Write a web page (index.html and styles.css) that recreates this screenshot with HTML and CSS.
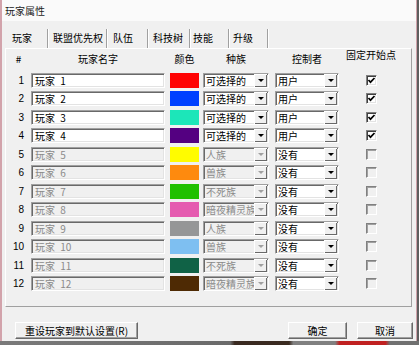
FILE: index.html
```html
<!DOCTYPE html>
<html>
<head>
<meta charset="utf-8">
<link rel="stylesheet" href="styles.css">
</head>
<body>
<div class="window">
  <div class="titlebar">玩家属性</div>
  <div class="tabs">
    <div class="tab active t1">玩家</div>
    <div class="tab t2">联盟优先权</div>
    <div class="tab t3">队伍</div>
    <div class="tab t4">科技树</div>
    <div class="tab t5">技能</div>
    <div class="tab t6">升级</div>
  </div>
  <div class="panel">
    <div class="grid head">
      <div class="hnum">#</div>
      <div class="hname">玩家名字</div>
      <div class="hcolor">颜色</div>
      <div class="hrace">种族</div>
      <div class="hctrl">控制者</div>
      <div class="hfix">固定开始点</div>
    </div>
    <div class="rows">
      <div class="grid row">
        <div class="num">1</div>
        <div class="field name">玩家 1</div>
        <div class="swatch c1"></div>
        <div class="combo race"><span class="val">可选择的</span><span class="btn"><span class="arrow"></span></span></div>
        <div class="combo ctrl"><span class="val">用户</span><span class="btn"><span class="arrow"></span></span></div>
        <div class="check on"><svg width="11" height="11" viewBox="0 0 11 11"><polyline points="2.5,5 4.5,7.2 8.5,3" fill="none" stroke="#000" stroke-width="1.7"/></svg></div>
      </div>
      <div class="grid row">
        <div class="num">2</div>
        <div class="field name">玩家 2</div>
        <div class="swatch c2"></div>
        <div class="combo race"><span class="val">可选择的</span><span class="btn"><span class="arrow"></span></span></div>
        <div class="combo ctrl"><span class="val">用户</span><span class="btn"><span class="arrow"></span></span></div>
        <div class="check on"><svg width="11" height="11" viewBox="0 0 11 11"><polyline points="2.5,5 4.5,7.2 8.5,3" fill="none" stroke="#000" stroke-width="1.7"/></svg></div>
      </div>
      <div class="grid row">
        <div class="num">3</div>
        <div class="field name">玩家 3</div>
        <div class="swatch c3"></div>
        <div class="combo race"><span class="val">可选择的</span><span class="btn"><span class="arrow"></span></span></div>
        <div class="combo ctrl"><span class="val">用户</span><span class="btn"><span class="arrow"></span></span></div>
        <div class="check on"><svg width="11" height="11" viewBox="0 0 11 11"><polyline points="2.5,5 4.5,7.2 8.5,3" fill="none" stroke="#000" stroke-width="1.7"/></svg></div>
      </div>
      <div class="grid row">
        <div class="num">4</div>
        <div class="field name">玩家 4</div>
        <div class="swatch c4"></div>
        <div class="combo race"><span class="val">可选择的</span><span class="btn"><span class="arrow"></span></span></div>
        <div class="combo ctrl"><span class="val">用户</span><span class="btn"><span class="arrow"></span></span></div>
        <div class="check on"><svg width="11" height="11" viewBox="0 0 11 11"><polyline points="2.5,5 4.5,7.2 8.5,3" fill="none" stroke="#000" stroke-width="1.7"/></svg></div>
      </div>
      <div class="grid row">
        <div class="num">5</div>
        <div class="field name off">玩家 5</div>
        <div class="swatch c5"></div>
        <div class="combo race off"><span class="val">人族</span><span class="btn"><span class="arrow"></span></span></div>
        <div class="combo ctrl"><span class="val">没有</span><span class="btn"><span class="arrow"></span></span></div>
        <div class="check off"></div>
      </div>
      <div class="grid row">
        <div class="num">6</div>
        <div class="field name off">玩家 6</div>
        <div class="swatch c6"></div>
        <div class="combo race off"><span class="val">兽族</span><span class="btn"><span class="arrow"></span></span></div>
        <div class="combo ctrl"><span class="val">没有</span><span class="btn"><span class="arrow"></span></span></div>
        <div class="check off"></div>
      </div>
      <div class="grid row">
        <div class="num">7</div>
        <div class="field name off">玩家 7</div>
        <div class="swatch c7"></div>
        <div class="combo race off"><span class="val">不死族</span><span class="btn"><span class="arrow"></span></span></div>
        <div class="combo ctrl"><span class="val">没有</span><span class="btn"><span class="arrow"></span></span></div>
        <div class="check off"></div>
      </div>
      <div class="grid row">
        <div class="num">8</div>
        <div class="field name off">玩家 8</div>
        <div class="swatch c8"></div>
        <div class="combo race off"><span class="val">暗夜精灵族</span><span class="btn"><span class="arrow"></span></span></div>
        <div class="combo ctrl"><span class="val">没有</span><span class="btn"><span class="arrow"></span></span></div>
        <div class="check off"></div>
      </div>
      <div class="grid row">
        <div class="num">9</div>
        <div class="field name off">玩家 9</div>
        <div class="swatch c9"></div>
        <div class="combo race off"><span class="val">人族</span><span class="btn"><span class="arrow"></span></span></div>
        <div class="combo ctrl"><span class="val">没有</span><span class="btn"><span class="arrow"></span></span></div>
        <div class="check off"></div>
      </div>
      <div class="grid row">
        <div class="num">10</div>
        <div class="field name off">玩家 10</div>
        <div class="swatch c10"></div>
        <div class="combo race off"><span class="val">兽族</span><span class="btn"><span class="arrow"></span></span></div>
        <div class="combo ctrl"><span class="val">没有</span><span class="btn"><span class="arrow"></span></span></div>
        <div class="check off"></div>
      </div>
      <div class="grid row">
        <div class="num">11</div>
        <div class="field name off">玩家 11</div>
        <div class="swatch c11"></div>
        <div class="combo race off"><span class="val">不死族</span><span class="btn"><span class="arrow"></span></span></div>
        <div class="combo ctrl"><span class="val">没有</span><span class="btn"><span class="arrow"></span></span></div>
        <div class="check off"></div>
      </div>
      <div class="grid row">
        <div class="num">12</div>
        <div class="field name off">玩家 12</div>
        <div class="swatch c12"></div>
        <div class="combo race off"><span class="val">暗夜精灵族</span><span class="btn"><span class="arrow"></span></span></div>
        <div class="combo ctrl"><span class="val">没有</span><span class="btn"><span class="arrow"></span></span></div>
        <div class="check off"></div>
      </div>
    </div>
  </div>
  <div class="footer">
    <div class="button reset">重设玩家到默认设置(R)</div>
    <div class="spacer"></div>
    <div class="button ok">确定</div>
    <div class="button cancel">取消</div>
  </div>
</div>
<div class="desk"></div>
</body>
</html>
```
FILE: styles.css
```css
html, body {
  margin: 0;
  padding: 0;
}
body {
  width: 419px;
  height: 345px;
  overflow: hidden;
  background: #5e5e5e;
  font-family: "Noto Sans CJK SC", "Liberation Sans", sans-serif;
  font-size: 10px;
  color: #000;
}
.window {
  box-sizing: border-box;
  width: 417px;
  height: 341px;
  background: #f0f0f0;
  border-left: 2px solid #d2a3ab;
  border-right: 1px solid #cfa2aa;
}
.titlebar {
  height: 21px;
  line-height: 22px;
  padding-left: 3px;
  background: #fafafa;
  color: #222;
}
.tabs {
  display: flex;
  margin-top: 8px;
  height: 19px;
  margin-left: 4px;
}
.tab {
  box-sizing: border-box;
  height: 19px;
  line-height: 18px;
  border-right: 1px solid #a0a0a0;
  box-shadow: 1px 0 0 #fff;
  white-space: nowrap;
}
.t1 { width: 42px; padding-left: 6px; }
.t2 { width: 59px; padding-left: 5px; }
.t3 { width: 41px; padding-left: 6px; }
.t4 { width: 42px; padding-left: 5px; }
.t5 { width: 39px; padding-left: 3px; }
.t6 { width: 39px; padding-left: 4px; }
.panel {
  box-sizing: border-box;
  margin-left: 3px;
  width: 407px;
  height: 259px;
  border: 1px solid;
  border-color: #fff #a0a0a0 #a0a0a0 #fff;
  padding-top: 2px;
}
.grid {
  display: grid;
  grid-template-columns: 25px 139px 33px 72px 64px 1fr;
  align-items: center;
}
.head {
  height: 15px;
  line-height: 15px;
  text-align: center;
}
.hnum { width: 25px; }
.hname { width: 134px; }
.hcolor { width: 29px; }
.hrace { width: 66px; }
.hctrl { width: 64px; }
.hfix { width: 64px; margin-top: -9px; }
.rows {
  margin-top: 5px;
}
.row {
  height: 18.5px;
}
.num {
  text-align: right;
  padding-right: 7px;
  font-family: "Liberation Sans", sans-serif;
  font-size: 10px;
}
.field, .combo {
  box-sizing: border-box;
  height: 15px;
  border: 1px solid;
  border-color: #a0a0a0 #fff #fff #a0a0a0;
  box-shadow: inset 1px 1px 0 #696969, inset -1px -1px 0 #e3e3e3;
  background: #fff;
  line-height: 13px;
  white-space: nowrap;
  overflow: hidden;
}
.name {
  width: 134px;
  padding-left: 3px;
  word-spacing: 3px;
}
.field.off {
  background: #f0f0f0;
  color: #8a8a8a;
}
.swatch {
  width: 29px;
  height: 15px;
}
.c1 { background: #ff0202; }
.c2 { background: #0040ff; }
.c3 { background: #1ce6b9; }
.c4 { background: #540081; }
.c5 { background: #fffc00; }
.c6 { background: #fe8a0e; }
.c7 { background: #20c000; }
.c8 { background: #e55bb0; }
.c9 { background: #959697; }
.c10 { background: #7ebff1; }
.c11 { background: #106246; }
.c12 { background: #4e2a04; }
.combo {
  display: flex;
  padding: 0 1px 0 2px;
}
.race { width: 66px; }
.ctrl { width: 64px; }
.combo .val {
  flex: 1;
  overflow: hidden;
  white-space: nowrap;
}
.combo .btn {
  box-sizing: border-box;
  width: 13px;
  height: 13px;
  background: #f0f0f0;
  box-shadow: inset 1px 1px 0 #fff, inset -1px -1px 0 #696969;
  display: flex;
  align-items: center;
  justify-content: center;
}
.arrow {
  width: 0;
  height: 0;
  border-left: 3px solid transparent;
  border-right: 3px solid transparent;
  border-top: 3px solid #000;
}
.combo.off {
  background: #f0f0f0;
  color: #8a8a8a;
}
.combo.off .arrow {
  border-top-color: #a0a0a0;
}
.check {
  box-sizing: border-box;
  width: 11px;
  height: 11px;
  margin-left: 27px;
  border: 1px solid;
  border-color: #808080 #fff #fff #808080;
  box-shadow: inset 1px 1px 0 #404040, inset -1px -1px 0 #e3e3e3;
  background: #fff;
  position: relative;
}
.check svg {
  position: absolute;
  left: -1px;
  top: -1px;
}
.check.off {
  background: #f0f0f0;
  box-shadow: inset 1px 1px 0 #a0a0a0;
}
.footer {
  display: flex;
  margin-top: 15px;
  height: 17px;
}
.button {
  box-sizing: border-box;
  height: 17px;
  line-height: 15px;
  text-align: center;
  border: 1px solid;
  border-color: #fff #696969 #696969 #fff;
  box-shadow: inset -1px -1px 0 #a0a0a0;
  background: #f0f0f0;
  white-space: nowrap;
}
.reset {
  margin-left: 13px;
  width: 123px;
}
.spacer { flex: 1; }
.ok {
  width: 59px;
  margin-right: 10px;
}
.cancel {
  width: 56px;
  margin-right: 3px;
}
.desk {
  height: 4px;
  background: linear-gradient(90deg, #7a7a7a 0, #6a6a6a 55%, #3a2a20 56%, #3a2a20 69%, #808080 70%, #808080 80%, #c02020 81%, #c02020 92%, #707070 93%);
}
```
